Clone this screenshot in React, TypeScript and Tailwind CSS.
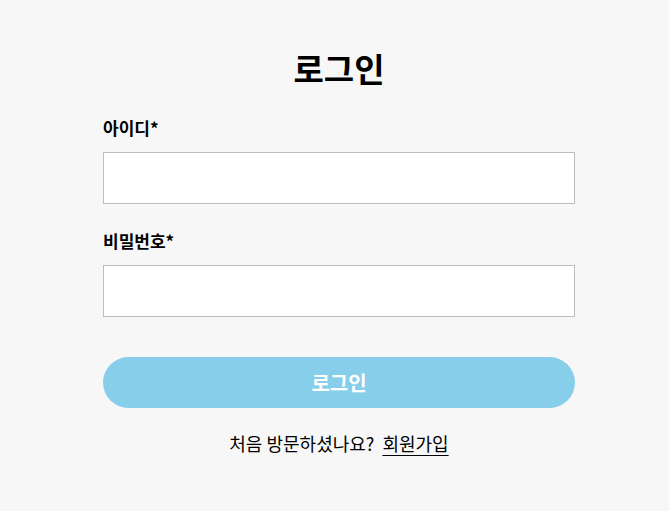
export default function App() {
  return (
    <div
      className="min-h-[511px] w-full bg-[#f7f7f7] text-black"
      style={{ fontFamily: '"Noto Sans CJK KR", "Noto Sans", sans-serif' }}
    >
      <div className="ml-[103px] flex w-[472px] flex-col pt-[44px]">
        <h1 className="text-center text-[33px] leading-[48px] font-bold">로그인</h1>

        <label className="mt-[24px] text-[17px] leading-[24px] font-bold">아이디*</label>
        <input
          type="text"
          className="mt-[12px] h-[52px] w-full border border-[#bdbdbd] bg-white px-3 outline-none"
        />

        <label className="mt-[25px] text-[17px] leading-[24px] font-bold">비밀번호*</label>
        <input
          type="password"
          className="mt-[12px] h-[52px] w-full border border-[#bdbdbd] bg-white px-3 outline-none"
        />

        <button className="mt-[40px] h-[51px] w-full rounded-full bg-[#87ceeb] text-[20px] font-bold text-white">
          로그인
        </button>

        <p className="mt-[23px] text-center text-[18px] leading-[24px]">
          처음 방문하셨나요?&nbsp;&nbsp;<a className="underline underline-offset-4">회원가입</a>
        </p>
      </div>
    </div>
  );
}
